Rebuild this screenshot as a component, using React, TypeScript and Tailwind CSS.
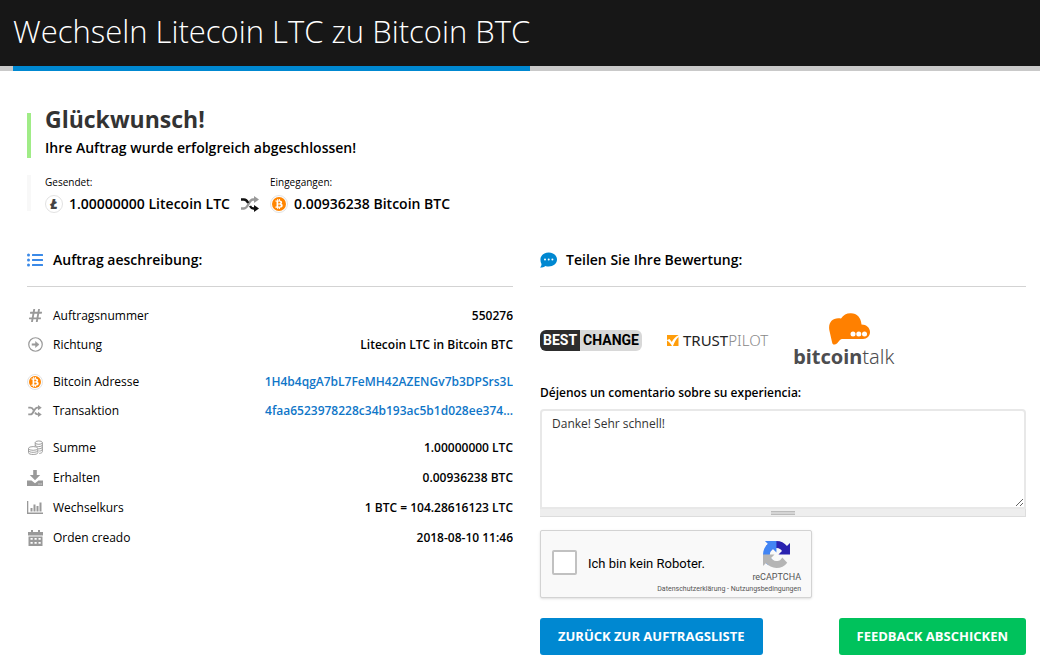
import { useState } from 'react';
import type { ReactNode } from 'react';
import { FaBtc, FaHashtag, FaListUl } from 'react-icons/fa';

const BitcoinIcon = ({ className }: { className: string }) => (
  <span className={`flex shrink-0 items-center justify-center rounded-full border border-[#e2e2e2] bg-white p-px ${className}`}>
    <span className="flex h-full w-full items-center justify-center rounded-full bg-[#ff8500] text-white">
      <FaBtc className="h-[10px] w-[10px]" />
    </span>
  </span>
);

const LitecoinIcon = () => (
  <span className="flex h-[18px] w-[18px] shrink-0 items-center justify-center rounded-full border border-[#e2e2e2] bg-white text-sm font-extrabold italic leading-none text-[#444]">
    Ł
  </span>
);

const ShuffleIcon = ({ main, className }: { main: string; className: string }) => (
  <svg viewBox="0 0 18 16" className={className} fill="none" strokeWidth="2.4">
    <path d="M0 12.5h3c4.5 0 4.5-9 9-9h2" stroke="#999" />
    <path d="M13 0l5 3.5-5 3.5z" fill="#999" />
    <path d="M0 3.5h3c2 0 3.2 1.5 4.2 3.5M9 10c.8 1.5 1.6 2.5 3.5 2.5H14" stroke={main} />
    <path d="M13 9l5 3.5-5 3.5z" fill={main} />
  </svg>
);

const ArrowCircleIcon = () => (
  <svg viewBox="0 0 16 16" className="h-[15px] w-[15px]" fill="none" stroke="#999">
    <circle cx="8" cy="8" r="7.2" strokeWidth="1.3" />
    <path d="M4 8h5" strokeWidth="2.2" />
    <path d="M8 4.8L11.8 8 8 11.2z" fill="#999" strokeWidth="0.5" />
  </svg>
);

const CoinsIcon = () => (
  <svg viewBox="0 0 16 16" className="h-[15px] w-[15px]" fill="none" stroke="#999" strokeWidth="1">
    <ellipse cx="11.5" cy="2.8" rx="3.8" ry="1.8" />
    <path d="M7.7 2.8v4M15.3 2.8v9.7c0 1-1.5 1.7-3.3 1.8M15.3 5.2c0 2.4-7.6 2.4-7.6 0M15.3 7.6c0 1.2-2 1.8-4 1.8M15.3 10c0 1-1.5 1.7-3.3 1.8" />
    <ellipse cx="5.5" cy="9" rx="5" ry="2" />
    <path d="M.5 9v4.5c0 2.6 10 2.6 10 0V9M.5 11.2c0 2.6 10 2.6 10 0" />
  </svg>
);

const DownloadIcon = () => (
  <svg viewBox="0 0 16 16" className="h-[16px] w-[16px]" fill="#999">
    <path d="M6.2 0h3.6v5h3.4L8 10.3 2.8 5h3.4z" />
    <path d="M0 10.5h4.5L8 13.2l3.5-2.7H16V16H0zM11.5 13.5v1h1v-1zM13.6 13.5v1h1v-1z" fillRule="evenodd" />
  </svg>
);

const ChartIcon = () => (
  <svg viewBox="0 0 16 13" className="h-[13px] w-[16px]" fill="#999">
    <path d="M0 0h1.3v11.6H16V13H0zM3.5 7h2v3.5h-2zM6.5 3.5h2v7h-2zM9.5 5h2v5.5h-2zM12.5 1.5h2v9h-2z" />
  </svg>
);

const CalendarIcon = () => (
  <svg viewBox="0 0 15 16" className="h-[16px] w-[15px]" fill="#999">
    <path
      fillRule="evenodd"
      d="M3 0h2v2h5V0h2v2h3v3.5H0V2h3zM.5 6.5h14V16H.5zM2.5 8v1.8h2.2V8zm4 0v1.8h2.2V8zm4 0v1.8h2.2V8zM2.5 12v1.8h2.2V12zm4 0v1.8h2.2V12zm4 0v1.8h2.2V12z"
    />
  </svg>
);

const CommentIcon = () => (
  <svg viewBox="0 0 17 16" className="h-[16px] w-[17px]">
    <path d="M8.7 0.5C13.3 0.5 17 3.6 17 7.5s-3.7 7-8.3 7c-1.2 0-2.3-.2-3.3-.6C4 15 2 15.7 0 15.6c1-.9 1.5-2.3 1.5-3.6C.8 10.8.4 9.3.4 7.5c0-3.9 3.7-7 8.3-7z" fill="#0088d1" />
    <g fill="#fff">
      <circle cx="5" cy="7.5" r="1" />
      <circle cx="8.7" cy="7.5" r="1" />
      <circle cx="12.4" cy="7.5" r="1" />
    </g>
  </svg>
);

const TrustIcon = () => (
  <svg viewBox="0 0 12 11" className="h-[11px] w-[12px]">
    <path d="M0 0h11.5v11H0z" fill="#ff9d0a" />
    <path d="M0 5l2.5-1L4.8 7C6.500 4 8.500 1.500 12 0v1.500C9 4 7.500 7 6 11H5C3.500 8.500 2 6.500 0 5.500z" fill="#fff" />
  </svg>
);

const TalkCloud = () => (
  <svg viewBox="0 0 41 32" className="ml-3 h-[32px] w-[41px]">
    <path
      d="M6 31.5C4 31.8 3.5 31 3 29L.3 17C-1 9 4 4 12 5.5 14.5 1.5 18 0 22 .2c6 .2 10 4.3 10.5 11.3C37.5 11.5 41 15 41 19s-3 7-7 7H13c-2.5 0-4 5-7 5.5z"
      fill="#ff8000"
    />
    <g fill="#fff">
      <circle cx="24" cy="21" r="2.5" />
      <circle cx="29.8" cy="21" r="2.5" />
      <circle cx="35.5" cy="21" r="2.5" />
    </g>
  </svg>
);

const RecaptchaLogo = () => (
  <svg viewBox="0 0 64 64" className="h-[27px] w-[27px]">
    <path
      fill="#2a22b0"
      d="M64 31.955l-.033-1.37V4.687l-7.16 7.16C50.948 4.674 42.033.093 32.05.093c-10.4 0-19.622 4.96-25.458 12.64l11.736 11.86a15.55 15.55 0 0 1 4.754-5.334c2.05-1.6 4.952-2.906 8.968-2.906.485 0 .86.057 1.135.163 4.976.393 9.288 3.14 11.828 7.124l-8.307 8.307L64 31.953"
    />
    <path
      fill="#4285f4"
      d="M31.862.094l-1.37.033H4.594l7.16 7.16C4.58 13.147 0 22.06 0 32.046c0 10.4 4.96 19.622 12.64 25.458L24.5 45.768a15.55 15.55 0 0 1-5.334-4.754c-1.6-2.05-2.906-4.952-2.906-8.968 0-.485.057-.86.163-1.135.393-4.976 3.14-9.288 7.124-11.828l8.307 8.307L31.86.095"
    />
    <path
      fill="#b5b5b5"
      d="M.001 32.045l.033 1.37v25.898l7.16-7.16c5.86 7.173 14.774 11.754 24.76 11.754 10.4 0 19.622-4.96 25.458-12.64l-11.736-11.86a15.55 15.55 0 0 1-4.754 5.334c-2.05 1.6-4.952 2.906-8.968 2.906-.485 0-.86-.057-1.135-.163-4.976-.393-9.288-3.14-11.828-7.124l8.307-8.307c-10.522.04-22.4.066-27.295-.005"
    />
  </svg>
);

type RowProps = { icon: ReactNode; label: string; children: ReactNode };

const Row = ({ icon, label, children }: RowProps) => (
  <div className="flex h-[29px] items-center text-xs">
    <span className="flex w-[16px] shrink-0 justify-center">{icon}</span>
    <dt className="ml-[10px] shrink-0">{label}</dt>
    <dd className="ml-auto truncate pl-4 font-semibold">{children}</dd>
  </div>
);

const SectionTitle = ({ icon, children }: { icon: ReactNode; children: ReactNode }) => (
  <h3 className="flex items-center border-b border-[#d3d3d3] pb-[9px] text-sm leading-[34px] font-semibold">
    <span className="mr-[9px] flex w-[17px] shrink-0">{icon}</span>
    {children}
  </h3>
);

export default function App() {
  const [comment, setComment] = useState('Danke! Sehr schnell!');
  const [human, setHuman] = useState(false);

  return (
    <div className="min-h-screen bg-white font-['Open_Sans',sans-serif] text-black">
      <header className="border-b-[5px] border-[#c9c9c9] bg-[#171717] px-[13px]">
        <h1 className="-mb-[5px] w-fit border-b-[5px] border-[#0088d1] pb-1 text-[31px] leading-[62px] font-light text-white">
          Wechseln Litecoin LTC zu Bitcoin BTC
        </h1>
      </header>

      <main className="pt-[42px] pr-[14px] pb-2 pl-[27px]">
        <div className="border-l-4 border-[#a0ec87] pl-[14px]">
          <h2 className="text-[23px] leading-[12px] font-bold text-[#333]">Glückwunsch!</h2>
          <p className="pt-3 text-sm leading-[21px] font-semibold">Ihre Auftrag wurde erfolgreich abgeschlossen!</p>
        </div>

        <div className="mt-[17px] flex items-start">
          <div className="h-9 w-1 bg-[#f8f8f8]" />
          <div className="ml-[14px]">
            <div className="text-[10px] leading-[14px]">Gesendet:</div>
            <div className="flex items-center gap-[6px] text-sm leading-[30px] font-semibold">
              <LitecoinIcon />
              1.00000000 Litecoin LTC
            </div>
          </div>
          <ShuffleIcon main="#111" className="mx-[11px] mt-[21px] h-[16px] w-[18px]" />
          <div>
            <div className="text-[10px] leading-[14px]">Eingegangen:</div>
            <div className="flex items-center gap-[6px] text-sm leading-[30px] font-semibold">
              <BitcoinIcon className="h-[18px] w-[18px]" />
              0.00936238 Bitcoin BTC
            </div>
          </div>
        </div>

        <div className="mt-6 grid grid-cols-2 gap-[27px]">
          {/* order details */}
          <section className="min-w-0">
            <SectionTitle icon={<FaListUl className="h-[16px] w-[16px] text-[#3b8ae8]" />}>Auftrag aeschreibung:</SectionTitle>
            <dl className="mt-[14px] flex flex-col gap-2">
              <div>
                <Row icon={<FaHashtag className="h-[15px] w-[15px] text-[#999]" />} label="Auftragsnummer">550276</Row>
                <Row icon={<ArrowCircleIcon />} label="Richtung">Litecoin LTC in Bitcoin BTC</Row>
              </div>
              <div>
                <Row icon={<BitcoinIcon className="h-[16px] w-[16px]" />} label="Bitcoin Adresse">
                  <a href="#address" className="text-[#0f76c8]">1H4b4qgA7bL7FeMH42AZENGv7b3DPSrs3L</a>
                </Row>
                <Row icon={<ShuffleIcon main="#999" className="h-[12px] w-[14px]" />} label="Transaktion">
                  <a href="#transaction" className="text-[#0f76c8]">4faa6523978228c34b193ac5b1d028ee374...</a>
                </Row>
              </div>
              <div className="flex flex-col gap-px">
                <Row icon={<CoinsIcon />} label="Summe">1.00000000 LTC</Row>
                <Row icon={<DownloadIcon />} label="Erhalten">0.00936238 BTC</Row>
                <Row icon={<ChartIcon />} label="Wechselkurs">1 BTC = 104.28616123 LTC</Row>
                <Row icon={<CalendarIcon />} label="Orden creado">2018-08-10 11:46</Row>
              </div>
            </dl>
          </section>

          {/* feedback */}
          <section className="min-w-0">
            <SectionTitle icon={<CommentIcon />}>Teilen Sie Ihre Bewertung:</SectionTitle>

            <div className="mt-[26px] flex h-[55px] items-center gap-[25px]">
              <a href="#bestchange" className="flex overflow-hidden rounded-md font-['Roboto',sans-serif] text-sm leading-[21px] font-bold">
                <span className="bg-[#2d2d2d] px-[3px] text-white">BEST</span>
                <span className="bg-[#d8d8d8] px-[3px] text-black">CHANGE</span>
              </a>
              <a href="#trustpilot" className="flex items-center gap-1 text-[#222]">
                <TrustIcon />
                <span className="font-['Noto_Sans',sans-serif] text-[15px]">
                  TRUST<span className="font-light text-[#888]">PILOT</span>
                </span>
              </a>
              <a href="#bitcointalk" className="flex flex-col items-center text-[#4d4d4f]">
                <TalkCloud />
                <span className="font-['Noto_Sans',sans-serif] text-xl leading-[23px]">
                  <b>bitcoin</b>
                  <span className="font-light">talk</span>
                </span>
              </a>
            </div>

            <form onSubmit={(e) => e.preventDefault()}>
              <label htmlFor="comment" className="mt-[15px] block text-xs leading-5 font-semibold">
                Déjenos un comentario sobre su experiencia:
              </label>
              <textarea
                id="comment"
                value={comment}
                onChange={(e) => setComment(e.target.value)}
                rows={5}
                className="mt-[6px] block h-[100px] w-full resize-y rounded-t-sm border-2 border-[#e8e8e8] px-[10px] py-1 text-xs leading-[18px] text-[#333] outline-none"
              />
              <div className="flex h-2 items-center justify-center border-r border-b border-[#ddd] bg-[#eee]">
                <div className="h-1 w-6 border-y border-[#bbb] bg-[#d5d5d5]" />
              </div>

              <div className="mt-[13px] flex h-[68px] w-[272px] items-start rounded-xs border border-[#d3d3d3] bg-[#f9f9f9] pr-[10px] pl-[11px] font-['Roboto',sans-serif] shadow-sm">
                <input
                  type="checkbox"
                  id="human"
                  checked={human}
                  onChange={(e) => setHuman(e.target.checked)}
                  className="mt-[19px] h-[25px] w-[25px] shrink-0 appearance-none rounded-xs border-2 border-[#c1c1c1] bg-white checked:bg-[#0088d1]"
                />
                <label htmlFor="human" className="mt-6 ml-[11px] shrink-0 text-[13px] leading-[18px]">
                  Ich bin kein Roboter.
                </label>
                <div className="flex min-w-0 grow flex-col items-end pt-[10px] text-[#555]">
                  <div className="flex flex-col items-center">
                    <RecaptchaLogo />
                    <span className="text-[9px] leading-[18px]">reCAPTCHA</span>
                  </div>
                  <span className="text-[7px] leading-[6px] whitespace-nowrap">Datenschutzerklärung - Nutzungsbedingungen</span>
                </div>
              </div>

              <div className="mt-5 flex justify-between text-[13px] leading-[37px] font-bold text-white text-shadow-[1px_1px_1px_rgb(0_0_0/0.5)]">
                <button type="button" className="rounded-[3px] bg-[#0088d1] px-[18px]">ZURÜCK ZUR AUFTRAGSLISTE</button>
                <button type="submit" className="rounded-[3px] bg-[#00c25c] px-[18px]">FEEDBACK ABSCHICKEN</button>
              </div>
            </form>
          </section>
        </div>
      </main>
    </div>
  );
}
